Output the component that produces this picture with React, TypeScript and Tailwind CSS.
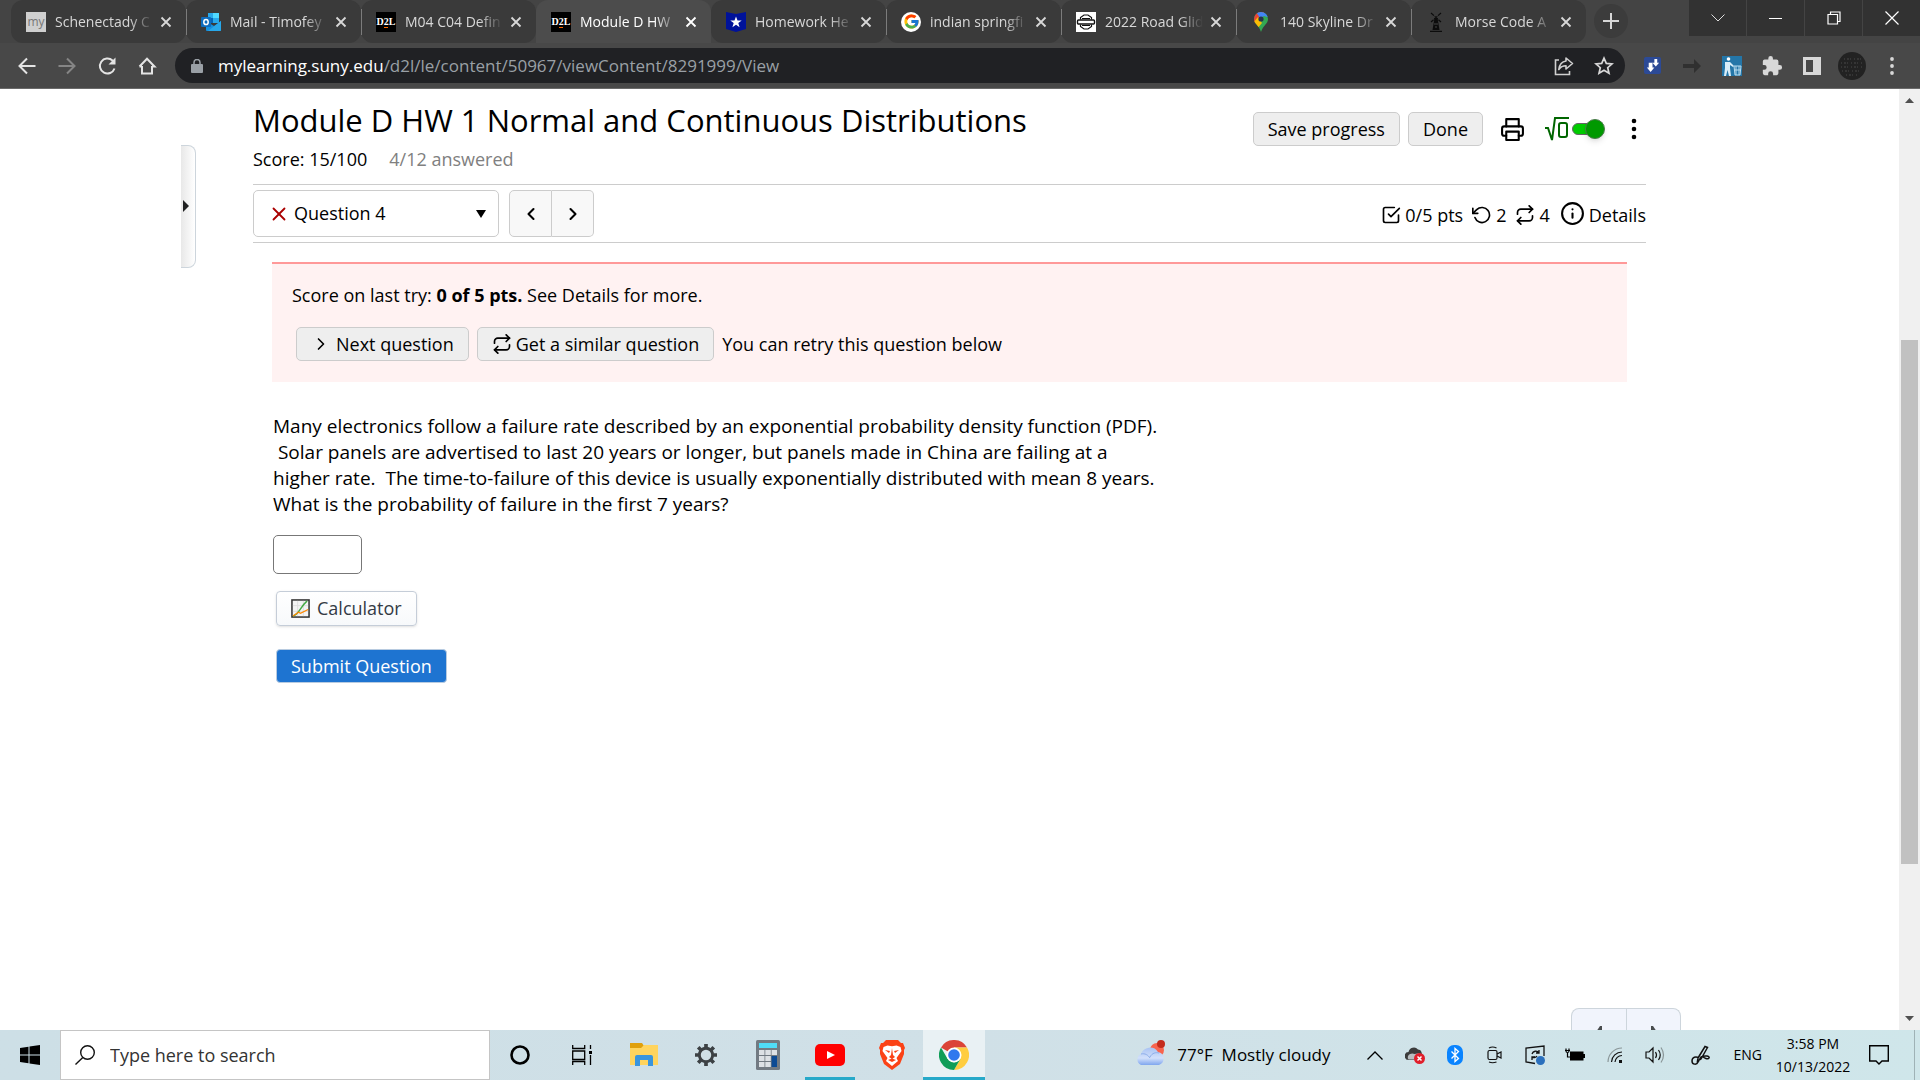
import React from 'react';
import { FiCheckSquare, FiRotateCcw, FiRepeat, FiInfo, FiPrinter, FiChevronLeft, FiChevronRight, FiX } from 'react-icons/fi';
import { FcGoogle } from 'react-icons/fc';

/* ---------- favicons ---------- */

const MyIcon = () => (
  <span className="flex size-5 items-center justify-center bg-[#cfcfcf] text-xs leading-none text-[#777]">my</span>
);

const OutlookIcon = () => (
  <svg viewBox="0 0 20 20" className="size-5">
    <path d="M7 1h11v10H7z" fill="#28a8ea" />
    <path d="M12 1h6v5h-6z" fill="#50d9ff" />
    <path d="M7 6h5v5H7z" fill="#0364b8" />
    <path d="M5 9l8 5 7-5v9a1 1 0 0 1-1 1H6a1 1 0 0 1-1-1z" fill="#1490df" />
    <path d="M20 9v9a1 1 0 0 1-1 1H7z" fill="#28a8ea" />
    <rect x="0" y="5" width="10" height="10" rx="1" fill="#0f6cbd" />
    <ellipse cx="5" cy="10" rx="2.2" ry="2.6" fill="none" stroke="#fff" strokeWidth="1.5" />
  </svg>
);

const D2LIcon = () => (
  <span className="relative flex size-5 items-center justify-center bg-black font-['Liberation_Serif',serif] text-[10px] leading-none font-bold text-white">
    D2L
    <span className="absolute bottom-1 left-2 h-px w-1 bg-orange-500" />
  </span>
);

const StarShieldIcon = () => (
  <svg viewBox="0 0 20 20" className="size-5">
    <path d="M0 0l10 2 10-2v17l-10 3-10-3z" fill="#00129a" />
    <path d="M10 4.500l1.500 4h4.200l-3.400 2.600 1.300 4.200-3.600-2.500-3.600 2.500 1.300-4.200-3.400-2.600h4.200z" fill="#fff" />
  </svg>
);

const GoogleIcon = () => (
  <span className="flex size-5 items-center justify-center rounded-full bg-white"><FcGoogle size={17} /></span>
);

const HarleyIcon = () => (
  <svg viewBox="0 0 20 20" className="size-5">
    <rect width="20" height="20" fill="#fff" />
    <path d="M4.500 7.500V5.500L8 3h4l3.500 2.500v2M4.500 12.500v2L8 17h4l3.500-2.500v-2M6 6.500h8M6 13.500h8" fill="none" stroke="#111" strokeWidth="1.200" />
    <rect x="1.500" y="8" width="17" height="4" rx="1" fill="#fff" stroke="#111" strokeWidth="1.400" />
  </svg>
);

const MapsIcon = () => (
  <svg viewBox="0 0 20 20" className="size-5">
    <defs>
      <clipPath id="pin"><path d="M10 0a7 7 0 0 1 7 7c0 5-5 6-7 13-2-7-7-8-7-13a7 7 0 0 1 7-7z" /></clipPath>
    </defs>
    <g clipPath="url(#pin)">
      <rect width="20" height="20" fill="#34a853" />
      <path d="M0 0h14L3 12H0z" fill="#ea4335" />
      <path d="M5 0h15v6L13 4 9 6z" fill="#4285f4" />
      <path d="M2 11l5-6 4 6-6 7z" fill="#fbbc04" />
    </g>
    <circle cx="10" cy="7" r="2.600" fill="#26344b" />
  </svg>
);

const WindmillIcon = () => (
  <svg viewBox="0 0 20 20" className="size-5" stroke="#0c0c0c" fill="#0c0c0c">
    <path d="M5 1l10 9M15 1L5 10" strokeWidth="1.200" strokeDasharray="4 1" />
    <path d="M8.500 6h3l2 12h-7z" stroke="none" />
    <path d="M4 19.500h12" strokeWidth="1.500" />
    <path d="M8 12h4M9 15h2" stroke="#444" />
  </svg>
);

const tabs = [
  { title: 'Schenectady C', icon: MyIcon },
  { title: 'Mail - Timofey', icon: OutlookIcon },
  { title: 'M04 C04 Defin', icon: D2LIcon },
  { title: 'Module D HW', icon: D2LIcon, active: true },
  { title: 'Homework He', icon: StarShieldIcon },
  { title: 'indian springfi', icon: GoogleIcon },
  { title: '2022 Road Glid', icon: HarleyIcon },
  { title: '140 Skyline Dr', icon: MapsIcon },
  { title: 'Morse Code A', icon: WindmillIcon },
];

/* ---------- browser ---------- */

const Tab: React.FC<{ title: string; icon: React.FC; active?: boolean; divider?: boolean }> = ({ title, icon: Icon, active, divider }) => (
  <div className={`relative flex h-[43px] w-[175px] min-w-0 shrink items-center pl-[15px] pr-2 ${active ? 'rounded-t-xl bg-[#4c4c4c] text-white' : 'rounded-xl bg-[#3a3a3a] text-[#d8d8d8]'}`}>
    {divider && <span className="absolute top-[9px] left-0 h-[26px] w-px bg-[#7c7c7c]" />}
    <span className="shrink-0"><Icon /></span>
    <span className="ml-[9px] w-[98px] overflow-hidden text-sm whitespace-nowrap [mask-image:linear-gradient(to_right,black_76%,transparent)]">{title}</span>
    <button aria-label={`Close ${title}`} className="ml-auto flex size-6 items-center justify-center">
      <svg viewBox="0 0 12 12" className="size-3" stroke="currentColor" strokeWidth="1.800"><path d="M1.500 1.500l9 9M10.500 1.500l-9 9" /></svg>
    </button>
  </div>
);

const TabStrip = () => (
  <div className="flex h-[43px] bg-[#444] pl-[11px]">
    {tabs.map((t, i) => (
      <Tab key={i} {...t} divider={i > 0 && !t.active && !tabs[i - 1].active} />
    ))}
    <button aria-label="New tab" className="mt-1 ml-2 flex size-[34px] shrink-0 items-center justify-center rounded-full bg-[#3c3c3c]">
      <svg viewBox="0 0 16 16" className="size-4" stroke="#d8d8d8" strokeWidth="2"><path d="M8 0v16M0 8h16" /></svg>
    </button>
    <div className="ml-auto flex h-9 gap-px">
      <button aria-label="Search tabs" className="flex w-[57px] items-center justify-center bg-[#323232]">
        <svg viewBox="0 0 14 8" className="h-2 w-[14px]" fill="none" stroke="#ddd"><path d="M.5.5L7 7 13.500.5" /></svg>
      </button>
      <button aria-label="Minimize" className="flex w-[57px] items-center justify-center bg-[#323232]">
        <span className="h-px w-[13px] bg-white" />
      </button>
      <button aria-label="Restore" className="flex w-[57px] items-center justify-center bg-[#323232]">
        <svg viewBox="0 0 14 14" className="size-[14px]" fill="none" stroke="#fff" strokeWidth="1.200"><path d="M1 3.500h9.500V13H1zM3.500 3.500V1H13v9.500h-2.500" /></svg>
      </button>
      <button aria-label="Close window" className="flex w-[57px] items-center justify-center bg-[#323232]">
        <svg viewBox="0 0 14 14" className="size-[14px]" stroke="#fff" strokeWidth="1.200"><path d="M.5.5l13 13M13.500.5l-13 13" /></svg>
      </button>
    </div>
  </div>
);

const ToolButton: React.FC<{ label: string; children: React.ReactNode }> = ({ label, children }) => (
  <button aria-label={label} className="flex size-10 shrink-0 items-center justify-center">{children}</button>
);

const AddressBar = () => (
  <div className="flex h-[46px] items-center border-b border-[#6a6a6a] bg-[#484848] pl-[7px] pr-2">
    <ToolButton label="Back">
      <svg viewBox="0 0 20 20" className="size-5" fill="none" stroke="#e4e4e4" strokeWidth="2"><path d="M18.500 10H3M10 2.500L2.500 10l7.500 7.500" /></svg>
    </ToolButton>
    <ToolButton label="Forward">
      <svg viewBox="0 0 20 20" className="size-5" fill="none" stroke="#858585" strokeWidth="2"><path d="M1.500 10H17M10 2.500l7.500 7.500-7.500 7.500" /></svg>
    </ToolButton>
    <ToolButton label="Reload">
      <svg viewBox="0 0 20 20" className="size-5" fill="none" stroke="#e4e4e4" strokeWidth="2"><path d="M17.500 12.500A7.500 7.500 0 1 1 15.500 4.500L17 6" /><path d="M18.500 1.500v7h-7z" fill="#e4e4e4" stroke="none" /></svg>
    </ToolButton>
    <ToolButton label="Home">
      <svg viewBox="0 0 20 20" className="size-5" fill="none" stroke="#e4e4e4" strokeWidth="2"><path d="M5 10v7.500h10V10M2.500 10.500L10 2.800l7.500 7.700H15M2.500 10.500H5" /></svg>
    </ToolButton>
    <div className="ml-2 flex h-[35px] min-w-0 flex-1 items-center rounded-full bg-[#202124] pl-4 pr-px">
      <svg viewBox="0 0 12 14" className="h-[14px] w-3 shrink-0" fill="#9aa0a6"><path d="M1 5h10a1 1 0 0 1 1 1v7a1 1 0 0 1-1 1H1a1 1 0 0 1-1-1V6a1 1 0 0 1 1-1z" /><path d="M3 6V3.500a3 3 0 0 1 6 0V6" fill="none" stroke="#9aa0a6" strokeWidth="1.500" /></svg>
      <a href="#content" className="ml-[15px] flex-1 truncate text-[17px] text-[#9aa0a6]">
        <span className="text-white">mylearning.suny.edu</span>/d2l/le/content/50967/viewContent/8291999/View
      </a>
      <ToolButton label="Share">
        <svg viewBox="0 0 20 20" className="size-5" fill="none" stroke="#d0d0d0" strokeWidth="1.600"><path d="M5 4H1.500v14.500h14V15" /><path d="M12 2l6.500 5.500L12 13V9.800C8.500 9.800 6.500 11 4.800 13.500 5.500 8.500 8 5.500 12 5z" strokeLinejoin="round" /></svg>
      </ToolButton>
      <ToolButton label="Bookmark">
        <svg viewBox="0 0 20 20" className="size-5" fill="none" stroke="#d8d8d8" strokeWidth="1.700"><path d="M10 2.200l2.300 5.200 5.700.5-4.300 3.800 1.300 5.600-5-3-5 3 1.300-5.600L2 7.900l5.700-.5z" /></svg>
      </ToolButton>
    </div>
    <div className="ml-[7px] flex">
      <ToolButton label="Download helper">
        <svg viewBox="0 0 18 18" className="size-[17px]"><rect width="18" height="18" rx="2" fill="#2c4a96" /><path d="M5 6h4v5h2l-4 5-4-5h2zM11 2h3v4h2l-3.500 4L9 6h2z" fill="#fff" /></svg>
      </ToolButton>
      <ToolButton label="Redirect">
        <svg viewBox="0 0 20 14" className="h-[14px] w-5" fill="#303030"><path d="M1 5h11V0l7 7-7 7V9H1z" /></svg>
      </ToolButton>
      <ToolButton label="Cleaner">
        <svg viewBox="0 0 20 20" className="size-5"><rect width="20" height="20" fill="#2476a8" /><circle cx="6.500" cy="3" r="1.800" fill="#fff" /><path d="M3 6h5l4 4-1 1-3-2v3l1 8H7l-1.500-6L4 20H2l1-8z" fill="#d9edf8" /><path d="M12 10h7l-1 9h-5zM14 10v9M17 10v9M12.500 14h6" fill="none" stroke="#b8dcef" /></svg>
      </ToolButton>
      <ToolButton label="Extensions">
        <svg viewBox="0 0 24 24" className="size-[22px]" fill="#d8d8d8"><path d="M20.500 11H19V7a2 2 0 0 0-2-2h-4V3.500a2.500 2.500 0 0 0-5 0V5H4a2 2 0 0 0-2 2v3.800h1.500a2.700 2.700 0 0 1 0 5.400H2V20a2 2 0 0 0 2 2h3.800v-1.500a2.700 2.700 0 0 1 5.400 0V22H17a2 2 0 0 0 2-2v-4h1.500a2.500 2.500 0 0 0 0-5z" /></svg>
      </ToolButton>
      <ToolButton label="Side panel">
        <svg viewBox="0 0 18 18" className="size-[18px]"><path d="M0 0h18v18H0zM3 3v12h7V3z" fill="#d8d8d8" fillRule="evenodd" /></svg>
      </ToolButton>
      <ToolButton label="Profile">
        <svg viewBox="0 0 28 28" className="size-7"><circle cx="14" cy="14" r="14" fill="#222" /><path d="M6 7h17M3 11h22M3 15h22M4 19h20M8 23h12" stroke="#484848" strokeDasharray="1 2 2 1 1 3" /></svg>
      </ToolButton>
      <ToolButton label="Menu">
        <svg viewBox="0 0 4 18" className="h-[18px] w-1" fill="#d8d8d8"><circle cx="2" cy="2" r="1.900" /><circle cx="2" cy="9" r="1.900" /><circle cx="2" cy="16" r="1.900" /></svg>
      </ToolButton>
    </div>
  </div>
);

/* ---------- page ---------- */

const greyButton = 'flex h-[34px] items-center rounded-[5px] border border-[#ccc] bg-[#eee] px-[14px]';

const PageHeader = () => (
  <header className="flex h-24 items-start justify-between border-b border-[#ccc]">
    <div>
      <h1 className="mt-[11px] text-[31px] leading-10">Module D HW 1 Normal and Continuous Distributions</h1>
      <p className="mt-1 flex gap-[22px] leading-[30px]">
        <span>Score: 15/100</span>
        <span className="text-[#808080]">4/12 answered</span>
      </p>
    </div>
    <div className="mt-[23px] flex items-center">
      <button className={greyButton}>Save progress</button>
      <button className={`${greyButton} ml-2`}>Done</button>
      <button aria-label="Print" className="ml-[17px]"><FiPrinter size={25} /></button>
      <label className="ml-5 flex items-center">
        <svg viewBox="0 0 24 24" className="size-6" fill="none" stroke="#060" strokeWidth="2" role="img" aria-label="Math input">
          <path d="M0 11h3l4 12L10 1h14" />
          <rect x="14" y="6" width="8" height="14" rx="2" />
        </svg>
        <input type="checkbox" role="switch" defaultChecked aria-label="Math editor" className="relative ml-[3px] h-3 w-[33px] appearance-none before:absolute before:inset-y-0 before:left-0 before:w-7 before:rounded-full before:border before:border-[#666] before:bg-[#0c0] after:absolute after:-top-1 after:right-0 after:size-5 after:rounded-full after:border after:border-[#4a7a4a] after:bg-[#090] after:shadow-md" />
      </label>
      <button aria-label="More options" className="ml-[17px] flex w-6 justify-center">
        <svg viewBox="0 0 6 22" className="h-[22px] w-[6px]"><circle cx="3" cy="3" r="2.300" /><circle cx="3" cy="11" r="2.300" /><circle cx="3" cy="19" r="2.300" /></svg>
      </button>
    </div>
  </header>
);

const QuestionBar = () => (
  <div className="flex h-[58px] items-center border-b border-[#ccc]">
    <div className="relative flex h-[47px] w-[246px] items-center rounded-[5px] border border-[#ccc] pl-[14px]">
      <FiX size={22} className="shrink-0 text-[#a00]" />
      <select aria-label="Question" className="w-full appearance-none bg-transparent pl-1">
        <option>Question 4</option>
      </select>
      <svg viewBox="0 0 10 8" className="pointer-events-none absolute right-3 h-2 w-[10px]"><path d="M0 0h10L5 8z" /></svg>
    </div>
    <div className="ml-[10px] flex">
      <button aria-label="Previous question" className="flex h-[47px] w-[43px] items-center justify-center rounded-l-[5px] border border-[#ccc] bg-[#f8f8f8]"><FiChevronLeft size={20} strokeWidth={2.5} /></button>
      <button aria-label="Next question" className="flex h-[47px] w-[42px] items-center justify-center rounded-r-[5px] border border-l-0 border-[#ccc] bg-[#f8f8f8]"><FiChevronRight size={20} strokeWidth={2.5} /></button>
    </div>
    <div className="ml-auto flex items-center pt-[3px]">
      <FiCheckSquare size={20} />
      <span className="ml-1">0/5 pts</span>
      <FiRotateCcw size={20} className="ml-[9px]" />
      <span className="ml-1">2</span>
      <FiRepeat size={20} className="ml-[9px]" />
      <span className="ml-1">4</span>
      <button className="ml-[10px] flex items-center gap-1"><FiInfo size={25} className="mb-1" />Details</button>
    </div>
  </div>
);

const QuestionPage = () => (
  <main id="content" className="relative flex min-w-0 flex-1 flex-col overflow-hidden px-[253px]">
    <button aria-label="Open navigation" className="absolute top-[56px] left-[181px] flex h-[123px] w-[15px] items-center rounded-r-lg border border-l-0 border-[#cdd5dc] bg-linear-to-r from-[#e8e8e8] to-white pb-[2px] pl-[2px]">
      <svg viewBox="0 0 6 12" className="h-3 w-[6px]" fill="#202122"><path d="M0 0l6 6-6 6z" /></svg>
    </button>
    <PageHeader />
    <QuestionBar />
    <section className="mx-[19px] mt-[19px] h-[120px] border-t-2 border-[#ff9999] bg-[#fff2f2] px-5 pt-[17px]">
      <p className="leading-7">Score on last try: <b>0 of 5 pts.</b> See Details for more.</p>
      <div className="mt-[18px] ml-1 flex items-center gap-2">
        <button className={greyButton}><FiChevronRight size={20} className="mr-[5px]" />Next question</button>
        <button className={greyButton}><FiRepeat size={20} className="mr-1" />Get a similar question</button>
        <span>You can retry this question below</span>
      </div>
    </section>
    <form className="ml-5 mt-[31px]">
      <p className="max-w-[900px] whitespace-pre text-[19px] leading-[26px]">
        Many electronics follow a failure rate described by an exponential probability density function (PDF).<br />
        {'\u00a0Solar panels are advertised to last 20 years or longer, but panels made in China are failing at a'}<br />
        {'higher rate.\u00a0 The time-to-failure of this device is usually exponentially distributed with mean 8 years.'}<br />
        What is the probability of failure in the first 7 years?
      </p>
      <input aria-label="Answer" className="mt-[18px] block h-[39px] w-[89px] rounded-[5px] border border-[#777] px-2" />
      <button type="button" className="mt-[17px] ml-[3px] flex h-[35px] items-center gap-[7px] rounded border border-[#c5cdd8] bg-linear-to-b from-white to-[#f7f9fb] px-[14px] text-[#333a45] shadow-sm">
        <svg viewBox="0 0 20 20" className="size-[19px]"><rect x="1" y="1" width="18" height="18" fill="#f4f4f4" stroke="#333" strokeWidth="1.600" /><path d="M2 7h16M2 13h16M7 2v16M13 2v16" stroke="#ddd" /><path d="M2 18C8 17 10 8 17 2" fill="none" stroke="#4a4" strokeWidth="1.500" /><path d="M2 18L8 14l2 1 8-4" fill="none" stroke="#f80" strokeWidth="1.300" /></svg>
        Calculator
      </button>
      <button type="button" className="mt-[23px] ml-[3px] flex h-[34px] items-center rounded border border-[#b8cbe0] bg-[#1e74d1] px-[14px] text-white">Submit Question</button>
    </form>
    <nav className="absolute right-[218px] bottom-0 flex h-[22px] overflow-hidden rounded-t-lg border border-b-0 border-[#cdd5dc] bg-[#f1f4fc]">
      <a href="#previous" aria-label="Previous page" className="w-[55px] border-r border-[#cdd5dc]"><svg viewBox="0 0 6 12" className="mx-auto mt-[17px] h-3 w-[6px]" fill="#494c4e"><path d="M4 0h2v12L0 6z" /></svg></a>
      <a href="#next" aria-label="Next page" className="w-[53px]"><svg viewBox="0 0 6 12" className="mx-auto mt-[17px] h-3 w-[6px]" fill="#494c4e"><path d="M2 0H0v12l6-6z" /></svg></a>
    </nav>
  </main>
);

const Scrollbar = () => (
  <div className="flex w-[21px] shrink-0 flex-col items-center bg-[#f0f0f0] py-[9px]">
    <svg viewBox="0 0 9 5" className="h-[5px] w-[9px] shrink-0" fill="#505050"><path d="M4.500 0L9 5H0z" /></svg>
    <div className="w-full flex-[237]" />
    <div className="w-[17px] flex-[524] bg-[#c1c1c1]" />
    <div className="w-full flex-[152]" />
    <svg viewBox="0 0 9 5" className="h-[5px] w-[9px] shrink-0" fill="#505050"><path d="M0 0h9L4.500 5z" /></svg>
  </div>
);

/* ---------- taskbar ---------- */

const FolderIcon = () => (
  <svg viewBox="0 0 28 26" className="h-[26px] w-7"><path d="M0 1h12l2 3v5H0z" fill="#e0a00c" /><path d="M0 6h11l3-3h14v20H0z" fill="#ffd45e" /><path d="M5 24v-9a2 2 0 0 1 2-2h14a2 2 0 0 1 2 2v9h-5v-6h-8v6z" fill="#3a95dd" /></svg>
);

const GearIcon = () => (
  <svg viewBox="0 0 24 24" className="size-[22px]" fill="none" stroke="#3c4144"><circle cx="12" cy="12" r="7.300" strokeWidth="3.200" /><path d="M12 0v4M12 20v4M0 12h4M20 12h4M3.500 3.500l3 3M17.500 17.500l3 3M20.500 3.500l-3 3M6.500 17.500l-3 3" strokeWidth="4" /></svg>
);

const CalculatorIcon = () => (
  <svg viewBox="0 0 24 30" className="h-[30px] w-6"><rect width="24" height="30" rx="1.500" fill="#727a82" /><rect x="3" y="3" width="18" height="5" fill="#4fdcf7" /><path d="M3 10h5.500v5H3zM9.300 10h5.500v5H9.300zM15.600 10H21v5h-5.400zM3 16h5.500v5H3zM9.300 16h5.500v5H9.300zM3 22h5.500v5H3zM9.300 22h5.500v5H9.300z" fill="#dde1e5" /><path d="M15.600 16H21v11h-5.400z" fill="#0c4a94" /></svg>
);

const YoutubeIcon = () => (
  <svg viewBox="0 0 30 22" className="h-[22px] w-[30px]"><rect width="30" height="22" rx="5" fill="#f00" /><path d="M12 7l8 4-8 4z" fill="#fff" /></svg>
);

const BraveIcon = () => (
  <svg viewBox="0 0 26 30" className="h-[30px] w-[26px]"><path d="M7 0h12l3 3 2 0 2 5-1 2 0 4-4 10-8 6-8-6L1 14V10L0 8l2-5 2 0z" fill="#fb4216" /><path d="M4.500 7l4-1.500 4.500.8 4.500-.8 4 1.500 1 4-5 7 1.500 3-6 5-6-5 1.500-3-5-7z" fill="#fff" /><path d="M6 10l5 1-1 2zM20 10l-5 1 1 2zM13 8l1 7 2 2-3 2-3-2 2-2zM9 20l4-1.500 4 1.500-4 2z" fill="#fb4216" /></svg>
);

const ChromeIcon = () => (
  <svg viewBox="0 0 30 30" className="size-[30px]">
    <path d="M15 15L2 7.500A15 15 0 0 1 28 7.500H15z" fill="#db4437" />
    <path d="M15 7.500h13A15 15 0 0 1 15 30l6.500-11.200z" fill="#ffcd40" />
    <path d="M2 7.500A15 15 0 0 0 15 30l6.500-11.200L15 22.500 8.500 18.700z" fill="#0f9d58" />
    <circle cx="15" cy="15" r="7.500" fill="#fff" /><circle cx="15" cy="15" r="5.800" fill="#3079ee" />
  </svg>
);

const WeatherIcon = () => (
  <svg viewBox="0 0 30 26" className="mb-1 h-[26px] w-[30px]">
    <defs><linearGradient id="cloud" x1="0" y1="0" x2="0" y2="1"><stop offset="0" stopColor="#a9c3f3" /><stop offset=".6" stopColor="#d2e0fb" /><stop offset="1" stopColor="#7fa6ee" /></linearGradient></defs>
    <circle cx="22" cy="10" r="7" fill="#f8644e" />
    <path d="M6 25a6 6 0 0 1 0-11A9.500 9.500 0 0 1 23 12a6.700 6.700 0 0 1 1 13z" fill="url(#cloud)" />
    <path d="M6 14c4-1 7 1 9 4M15 17c2-4 6-5 9-4" fill="none" stroke="#8daeea" />
    <circle cx="26" cy="4" r="4" fill="#c42b1c" />
  </svg>
);

const tray: { label: string; icon: React.ReactNode }[] = [
  { label: 'Show hidden icons', icon: <svg viewBox="0 0 16 9" className="h-[9px] w-4" fill="none" stroke="#000" strokeWidth="1.300"><path d="M.5 8.500L8 1l7.500 7.500" /></svg> },
  { label: 'OneDrive', icon: <svg viewBox="0 0 20 18" className="h-[18px] w-5"><path d="M4 14a4 4 0 0 1-.5-8A5.500 5.500 0 0 1 13 3.500c3 0 4 3 4 5.500l-8 5z" fill="#3c3c3c" /><path d="M3.500 13.500c-2.500-4 2.500-7.500 6-5.500l6-1-5 6.500z" fill="#b9bdc0" /><circle cx="14.500" cy="12.500" r="5.500" fill="#e01f2b" /><path d="M12.500 10.500l4 4M16.500 10.500l-4 4" stroke="#fff" strokeWidth="1.500" /></svg> },
  { label: 'Bluetooth', icon: <svg viewBox="0 0 16 20" className="h-5 w-4"><rect width="16" height="20" rx="7" fill="#0a84ff" /><path d="M4.500 6.500l7 7L8 16.500v-13l3.500 3-7 7" fill="none" stroke="#fff" strokeWidth="1.300" /></svg> },
  { label: 'Meet now', icon: <svg viewBox="0 0 16 18" className="h-[18px] w-4" fill="none" stroke="#111" strokeWidth="1.200"><rect x="1" y="4.500" width="9" height="9" rx="1.500" /><path d="M10 8l4-2v6l-4-2M2 2Q5.500 0 9.500 2M2 16q3.500 1.500 7.500 0" /></svg> },
  { label: 'Windows Update', icon: <svg viewBox="0 0 20 20" className="size-5" fill="none" stroke="#111" strokeWidth="1.300"><path d="M19 11V1L1 3v14l9 1.500M7 9c1-3 5-4 7-1M14 5v3h-3M12 11c-1 2-4 2-5 1M7 15v-3h3" /><circle cx="15.500" cy="15.500" r="4.500" fill="#2b70bd" stroke="none" /></svg> },
  { label: 'Battery', icon: <svg viewBox="0 0 20 14" className="h-[14px] w-5"><path d="M1 .5V3a1.500 1.500 0 0 0 3 0V.5M0 2.500h5M2.500 5v4h3" fill="none" stroke="#000" strokeWidth="1.200" /><path d="M5 3.500h13.500v9H5zM18.500 6H20v4h-1.500z" /></svg> },
  { label: 'Wi-Fi', icon: <svg viewBox="0 0 16 16" className="size-4" fill="none" stroke="#111" strokeWidth="1.200"><path d="M1 15A14 14 0 0 1 15 1" stroke="#8a9698" /><path d="M4.500 15A10.500 10.500 0 0 1 15 5M8 15a7 7 0 0 1 7-6.500" /><path d="M12 13h3v3h-3z" fill="#111" stroke="none" /></svg> },
  { label: 'Volume', icon: <svg viewBox="0 0 20 18" className="h-[18px] w-5" fill="none" stroke="#111" strokeWidth="1.200"><path d="M1 6h3l4-4v14l-4-4H1zM10.500 6q2 3 0 6M13.500 4q3.500 5 0 10" /><path d="M16 1.500q5 7.500 0 15" stroke="#8a9698" /></svg> },
];

const Pinned: React.FC<{ label: string; children: React.ReactNode }> = ({ label, children }) => (
  <button aria-label={label} className="flex h-full w-[62px] items-center justify-center">{children}</button>
);

const Taskbar = () => (
  <footer className="flex h-[50px] shrink-0 items-center bg-linear-to-r from-[#cddfe6] via-[#d0e0e7] to-[#cfe6ea] text-black">
    <button aria-label="Start" className="flex w-[60px] justify-center">
      <svg viewBox="0 0 20 20" className="size-5"><path d="M0 3l8.500-1.200v7.700H0zM9.500 1.600L20 0v9.500H9.500zM0 10.500h8.500v7.700L0 17zM9.500 10.500H20V20L9.500 18.400z" /></svg>
    </button>
    <label className="flex h-full w-[430px] items-center border border-[#c5c5c5] bg-white pl-[14px]">
      <svg viewBox="0 0 20 20" className="size-5 shrink-0" fill="none" stroke="#111" strokeWidth="1.400"><circle cx="12.500" cy="7.500" r="6.800" /><path d="M7.800 12.500L.5 19.500" /></svg>
      <input aria-label="Search" placeholder="Type here to search" className="ml-[15px] w-full text-[18px] outline-none placeholder:text-[#333]" />
    </label>
    <div className="-ml-px flex h-full">
      <Pinned label="Cortana"><svg viewBox="0 0 20 20" className="size-5" fill="none" stroke="#000" strokeWidth="2.600"><circle cx="10" cy="10" r="8.500" /></svg></Pinned>
      <Pinned label="Task view">
        <svg viewBox="0 0 20 20" className="size-5" fill="none" stroke="#000" strokeWidth="1.300"><path d="M.7 0v3.500h12V0M.7 6h12v8.500H.7zM.7 20v-3.500h12V20M18.500 0v4M18.500 10v10" /><path d="M17 6h3v3h-3z" fill="#000" stroke="none" /></svg>
      </Pinned>
      <Pinned label="File Explorer"><FolderIcon /></Pinned>
      <Pinned label="Settings"><GearIcon /></Pinned>
      <Pinned label="Calculator"><CalculatorIcon /></Pinned>
      <button aria-label="YouTube" className="relative flex h-full w-[62px] items-center justify-center"><YoutubeIcon /><span className="absolute inset-x-[6px] bottom-0 h-[3px] bg-[#27a9c9]" /></button>
      <Pinned label="Brave"><BraveIcon /></Pinned>
      <button aria-label="Chrome" className="relative flex h-full w-[62px] items-center justify-center bg-[#e9f1f4]"><ChromeIcon /><span className="absolute inset-x-0 bottom-0 h-[3px] bg-[#27a9c9]" /></button>
    </div>
    <button className="ml-auto flex items-center gap-3 text-[17px] whitespace-pre"><WeatherIcon />77°F  Mostly cloudy</button>
    <div className="ml-6 flex">
      {tray.map((t) => (
        <button key={t.label} aria-label={t.label} className="flex w-10 items-center justify-center">{t.icon}</button>
      ))}
    </div>
    <button aria-label="Pen" className="ml-[11px] flex w-[30px] justify-center">
      <svg viewBox="0 0 20 20" className="size-5" fill="none" stroke="#111" strokeWidth="1.500"><path d="M7 13L14 1.500l2.500 1L10 14l-3.500 2zM1 16c0-4 4-5 7-3M1 16c0 4 5 4 6 1l3-5c4-2 9-1 8 1s-5 0-7-2" /></svg>
    </button>
    <button className="ml-[18px] text-sm">ENG</button>
    <button className="ml-[9px] flex w-[84px] flex-col items-center text-sm leading-[23px]"><span>3:58 PM</span><span>10/13/2022</span></button>
    <button aria-label="Notifications" className="ml-[14px] mr-[25px] flex items-center">
      <svg viewBox="0 0 20 20" className="size-5" fill="none" stroke="#000" strokeWidth="1.400"><path d="M.7.7h18.600V16H13l-3 3-3-3H.7z" /></svg>
    </button>
    <span className="mr-[5px] h-full w-px bg-[#9fb2b6]" />
  </footer>
);

const App: React.FC = () => {
  return (
    <div className="flex h-screen min-h-[760px] flex-col overflow-hidden bg-white font-['Open_Sans',sans-serif]">
      <TabStrip />
      <AddressBar />
      <div className="flex min-h-0 flex-1 text-[18px] text-black">
        <QuestionPage />
        <Scrollbar />
      </div>
      <Taskbar />
    </div>
  );
};

export default App;
